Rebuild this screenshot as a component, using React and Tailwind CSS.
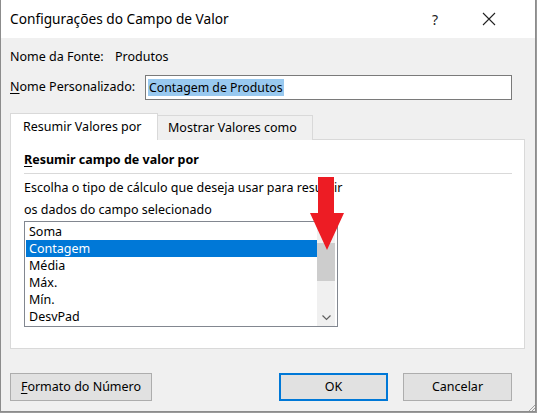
import React from 'react'

const items = ['Soma', 'Contagem', 'Média', 'Máx.', 'Mín.', 'DesvPad']

function Btn({ children, className = '', primary }) {
  return (
    <button
      className={
        'h-[28px] bg-[#e1e1e1] text-[12.5px] text-black flex items-center justify-center ' +
        (primary ? 'border-2 border-[#0078d7] ' : 'border border-[#adadad] ') +
        className
      }
    >
      {children}
    </button>
  )
}

export default function App() {
  return (
    <div
      className="relative w-[537px] h-[413px] bg-[#9a9a9a] overflow-hidden"
      style={{ fontFamily: '"Noto Sans", "Open Sans", sans-serif' }}
    >
      <div className="w-[536px] h-[412px] flex flex-col bg-[#f0f0f0] border-l border-r border-b border-[#8c8c8c]">
        {/* title bar */}
        <div className="h-[38px] bg-white flex items-center pl-[9px] shrink-0">
          <span className="text-[13.7px] text-black">Configurações do Campo de Valor</span>
          <span className="ml-auto w-[20px] text-center text-[14px] text-[#222] mr-[37px]">?</span>
          <svg width="14" height="14" viewBox="0 0 14 14" className="mr-[39px]">
            <path d="M1 1 L13 13 M13 1 L1 13" stroke="#222" strokeWidth="1.1" />
          </svg>
        </div>

        {/* body */}
        <div className="flex-1 flex flex-col px-[9px] text-[12.5px] text-black">
          <div className="flex items-center h-[17px] mt-[11px]">
            <span className="w-[105px]">Nome da Fonte:</span>
            <span>Produtos</span>
          </div>
          <div className="flex items-center mt-[9px] h-[25px]">
            <span className="w-[135px]">
              <span className="underline underline-offset-2">N</span>ome Personalizado:
            </span>
            <div className="w-[367px] h-[25px] bg-white border border-[#7a7a7a] flex items-center pl-[2px]">
              <span className="bg-[#99c9ef] px-[1px] leading-[17px] text-[12.3px]">Contagem de Produtos</span>
            </div>
          </div>

          {/* tabs */}
          <div className="flex items-end mt-[13px] h-[27px] relative z-10">
            <div className="h-[27px] w-[148px] bg-white border border-b-0 border-[#d9d9d9] flex items-center pl-[12px]">
              Resumir Valores por
            </div>
            <div className="h-[25px] w-[155px] bg-[#f0f0f0] border border-l-0 border-b-0 border-[#d9d9d9] flex items-center pl-[10px]">
              Mostrar Valores como
            </div>
          </div>
          <div className="w-[515px] h-[210px] -mt-[1px] bg-white border border-[#d9d9d9] pl-[13px] pr-[12px]">
            <div className="mt-[12px] h-[17px] flex items-center font-bold">
              <span className="underline underline-offset-2">R</span>esumir campo de valor por
            </div>
            <div className="mt-[4px] border-t border-[#d9d9d9]"></div>
            <div className="mt-[3px] leading-[22px]">
              <div>Escolha o tipo de cálculo que deseja usar para resumir</div>
              <div>os dados do campo selecionado</div>
            </div>
            <div className="w-[314px] h-[106px] border border-[#828790] flex pt-[1px] pl-[1px]">
              <div className="flex-1 flex flex-col">
                {items.map((it, i) => (
                  <div
                    key={it}
                    className={
                      'h-[17px] leading-[17px] pl-[3px] ' + (i === 1 ? 'bg-[#0078d7] text-white' : '')
                    }
                  >
                    {it}
                  </div>
                ))}
              </div>
              <div className="w-[18px] h-[103px] bg-[#f0f0f0] flex flex-col mr-[2px]">
                <div className="h-[20px]"></div>
                <div className="h-[38px] bg-[#cdcdcd]"></div>
                <div className="flex-1"></div>
                <div className="h-[17px] flex items-center justify-center">
                  <svg width="9" height="6" viewBox="0 0 9 6">
                    <path d="M0.5 0.5 L4.5 4.5 L8.5 0.5" stroke="#606060" strokeWidth="1.2" fill="none" />
                  </svg>
                </div>
              </div>
            </div>
          </div>

          {/* buttons */}
          <div className="flex mt-[24px]">
            <Btn className="w-[142px]">
              <span>
                <span className="underline underline-offset-2">F</span>ormato do Número
              </span>
            </Btn>
            <Btn primary className="w-[109px] ml-[127px]">OK</Btn>
            <Btn className="w-[109px] ml-[15px]">Cancelar</Btn>
          </div>
        </div>
      </div>

      {/* resize grip */}
      <svg className="absolute left-[526px] top-[402px]" width="10" height="10" viewBox="0 0 10 10">
        <path d="M9 3 L3 9 M9 6 L6 9" stroke="#a0a0a0" strokeWidth="1" />
      </svg>

      {/* red arrow annotation */}
      <svg className="absolute left-[308px] top-[177px]" width="38" height="75" viewBox="0 0 38 75">
        <path d="M10 0 L26 0 L26 36 L36 36 L19 73 L2 36 L10 36 Z" fill="#ed1c24" />
      </svg>
    </div>
  )
}
